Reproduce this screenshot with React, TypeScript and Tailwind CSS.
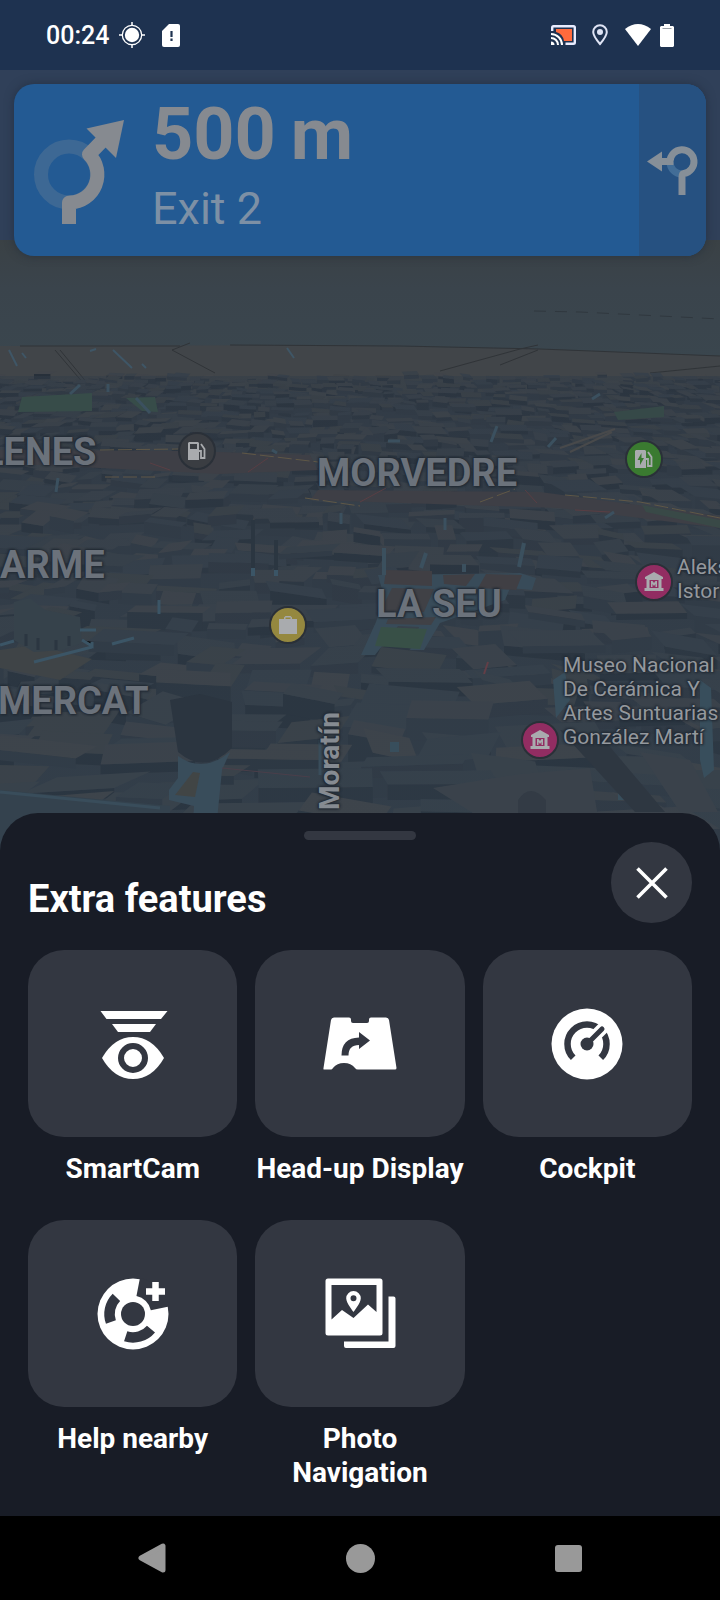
import React from "react";

type Feature = {
  name: string;
  icon: React.ReactNode;
};

type Poi = {
  kind: "fuel" | "charge" | "shop" | "museum";
  place: string;
  color: string;
};

const areas = [
  { name: "LENES", place: "left-[-17px] top-[430px]" },
  { name: "MORVEDRE", place: "left-[317px] top-[451px]" },
  { name: "ARME", place: "left-[0px] top-[543px]" },
  { name: "LA SEU", place: "left-[376px] top-[582px]" },
  { name: "MERCAT", place: "left-[-2px] top-[679px]" },
];

const pois: Poi[] = [
  { kind: "fuel", place: "left-[178px] top-[432px]", color: "bg-[#3a3d42]" },
  { kind: "charge", place: "left-[625px] top-[440px]", color: "bg-[#3a7a30]" },
  { kind: "shop", place: "left-[269px] top-[606px]", color: "bg-[#95883f]" },
  { kind: "museum", place: "left-[635px] top-[563px]", color: "bg-[#922d62]" },
  { kind: "museum", place: "left-[521px] top-[721px]", color: "bg-[#922d62]" },
];

const outline =
  "[text-shadow:0_0_2px_#242c36,0_0_3px_#242c36,1px_1px_2px_#242c36,-1px_-1px_2px_#242c36]";

// Same city on every render
function makeCity() {
  let seed = 17;
  const rnd = () => {
    seed = (seed * 16807) % 2147483647;
    return seed / 2147483647;
  };
  const roofs = ["#3b424a", "#40444a", "#394149", "#43464a", "#37404a", "#3f4347"];
  const walls = ["#2a333d", "#2f3842", "#27303a", "#313a44"];
  const blocks: { wall: string; roof: string; wallFill: string; roofFill: string }[] = [];

  for (let y = 376; y < 880; y += 3 + (y - 360) * 0.036) {
    const s = (y - 335) / 100;
    for (let x = -60; x < 760; ) {
      const w = 6 + s * (6 + rnd() * 20);
      const d = 1.5 + s * (1.5 + rnd() * 5);
      const h = 2 + s * (1.5 + rnd() * rnd() * 9);
      const lean = ((x - 360) / 360) * d * 1.6 + (rnd() - 0.5) * d * 2;
      const tilt = (rnd() - 0.35) * s * 5;
      const top = y + (rnd() - 0.5) * (6 + s * 8);
      const p = (n: number) => n.toFixed(1);
      blocks.push({
        roof: `M${p(x)} ${p(top)}L${p(x + w)} ${p(top + tilt)}L${p(x + w + lean)} ${p(top + d + tilt)}L${p(x + lean)} ${p(top + d)}Z`,
        wall: `M${p(x + lean)} ${p(top + d)}L${p(x + w + lean)} ${p(top + d + tilt)}V${p(top + d + h + tilt)}L${p(x + lean)} ${p(top + d + h)}Z`,
        roofFill: roofs[Math.floor(rnd() * roofs.length)],
        wallFill: walls[Math.floor(rnd() * walls.length)],
      });
      x += w + rnd() * s * 4;
    }
  }
  return blocks;
}

const city = makeCity();

function CityDrawing() {
  return (
    <svg
      className="absolute inset-0 h-full w-full"
      viewBox="0 0 720 1600"
      preserveAspectRatio="xMidYMin slice"
      aria-hidden="true"
    >
      <defs>
        <linearGradient id="sky" x1="0" y1="0" x2="0" y2="1">
          <stop offset="0" stopColor="#3a4145" />
          <stop offset="0.4" stopColor="#3a444c" />
          <stop offset="1" stopColor="#3a464e" />
        </linearGradient>
        <linearGradient id="shade" x1="0" y1="0" x2="0" y2="1">
          <stop offset="0" stopColor="#333b45" stopOpacity="0.4" />
          <stop offset="1" stopColor="#354450" stopOpacity="0.25" />
        </linearGradient>
      </defs>
      <rect width="720" height="1600" fill="#333c46" />
      <rect width="720" height="246" fill="#304059" />
      <rect y="240" width="720" height="120" fill="url(#sky)" />
      <path d="M0 346L300 345L540 349L720 356V392H0Z" fill="#414549" />
      <path d="M534 311L580 312L640 315L720 319" stroke="#30383f" strokeDasharray="12 9" fill="none" />
      <g stroke="#303438" fill="none">
        <path d="M20 346H180M230 345L400 346L540 349L720 356" />
        <path d="M55 350L84 384M60 350L88 384M172 350L215 373M190 343L172 350M440 371L520 349L538 345M500 365L538 350M650 373L720 366" />
      </g>
      <path d="M9 350L17 366M22 353L26 358M113 350L132 368M142 364L146 368M287 348L294 358M90 351L96 349" stroke="#3f5666" strokeWidth="2" />

      {city.map((b, i) => (
        <g key={i}>
          <path d={b.wall} fill={b.wallFill} />
          <path d={b.roof} fill={b.roofFill} />
        </g>
      ))}
      <rect y="376" width="720" height="500" fill="url(#shade)" />

      <path d="M22 397L92 393V411L18 412ZM126 398L155 397L158 412L142 411Z" fill="#384e48" />
      <path d="M614 412L664 406V417L618 420Z" fill="#374b47" />
      <path d="M0 450L190 451L310 455L318 470L220 474L0 463ZM318 490L540 492L720 516V528L560 508L310 500Z" fill="#403f45" />
      <path d="M100 450L180 449M242 453L318 462M105 477H155M305 498L360 506M480 502L515 489M565 495L640 502L720 518" stroke="#665b46" strokeDasharray="14 4" fill="none" />
      <path d="M248 472L268 458M360 502L386 488M525 490L537 503M150 463L170 470M575 510L610 512" stroke="#5f3e42" />
      <path d="M560 448L615 429M570 452L612 432" stroke="#4c4b4a" strokeWidth="2" />
      <path d="M642 505L720 520V528L646 512Z" fill="#3b4b46" />
      <path d="M136 398L150 413M80 385L70 394M108 384V392M272 450L277 453M58 478L56 492M341 513V524M445 518V530M548 447L556 438M592 399L600 394M605 518L614 512M491 442L497 426M388 441H400" stroke="#3d5361" strokeWidth="3" />

      <path d="M378 575L520 573L536 578L532 590L510 588L505 600L440 623L424 650H410L419 627L398 626L375 655H361L376 622L384 597Z" fill="#3a4d5a" />
      <path d="M386 570L432 571V586L384 584ZM443 575L475 574L466 586L444 584ZM486 574L522 575L516 590L478 588Z" fill="#423f43" />
      <path d="M392 588L434 589L424 612H380ZM388 619L436 617L431 625L386 624Z" fill="#424145" />
      <path d="M381 627L427 629L420 649L375 646Z" fill="#3a5346" />
      <path d="M384 548V575M426 553L421 568M524 543L519 567M464 564V572" stroke="#3d5260" strokeWidth="4" />

      <path d="M0 650L34 645L92 659L60 680L0 668Z" fill="#414546" />
      <path d="M14 602L30 598L45 610L80 617L82 643L62 650L34 652L14 640Z" fill="#37424b" />
      <path d="M26 634V646M38 638V650M56 640V650M69 636V646" stroke="#2b353f" strokeWidth="3" />
      <path d="M0 645L14 641M34 662L92 647M82 640L92 646V642M112 644L134 638M80 630H96M159 600V614" stroke="#3d5869" strokeWidth="3" />
      <path d="M253 520V568M276 540V570" stroke="#2b353f" strokeWidth="4" />
      <path d="M253 568V576M276 570V576" stroke="#3d5869" strokeWidth="4" />

      <path d="M170 700L200 694L232 702V748Q205 775 178 752Z" fill="#2b343e" />
      <path d="M178 756Q203 774 230 752L222 770L215 840H192L194 806L169 800V790L178 778Z" fill="#3b4f5d" />
      <path d="M193 772L200 773L195 797L175 795Z" fill="#444644" />
      <path d="M0 790L170 806V860H0Z" fill="#35434e" />
      <path d="M0 792L160 808M320 740V775" stroke="#3b4f5d" strokeWidth="3" />
      <path d="M222 768L310 777" stroke="#4e3f49" />
      <path d="M553 680L565 672L570 700L556 718ZM700 680L711 688L714 770L704 778L700 760ZM620 640V650M390 742H399V752H390ZM618 793H628V800H618Z" fill="#3a505e" />
      <path d="M560 730L600 735L665 812H635Z" fill="#2e363f" />
      <path d="M484 674L488 662" stroke="#6a3e46" strokeWidth="2" />
      <path d="M433 788L520 774L590 768L600 830H500ZM640 752L690 760L718 812H680Z" fill="#3c434b" />
      <path d="M518 800Q530 782 546 800V813H518Z" fill="#343b44" />
      <rect y="376" width="720" height="500" fill="#344453" opacity="0.12" />
    </svg>
  );
}

function PoiIcon({ kind }: { kind: Poi["kind"] }) {
  return (
    <svg viewBox="0 0 20 20" className="h-5 w-5" fill="#a9abae" aria-hidden="true">
      {kind === "museum" && (
        <path
          fillRule="evenodd"
          d="M10 0L19 5V7H17.5V16H19.5V19H.5V16H2.500V7H1V5ZM5.500 8V16H14.500V8ZM7 9H8.500L10 11L11.500 9H13V15H11.500V12L10 14L8.500 12V15H7Z"
        />
      )}
      {kind === "shop" && (
        <path fillRule="evenodd" d="M6 4V2.500L7.500 1H12.500L14 2.500V4H19V19H1V4ZM7.500 4H12.500V2.500H7.500Z" />
      )}
      {(kind === "fuel" || kind === "charge") && (
        <>
          <path
            fillRule="evenodd"
            d={
              kind === "fuel"
                ? "M2 1H11L12 2V19H1V2ZM3 3V8H10V3Z"
                : "M2 1H11L12 2V19H1V2ZM7.500 4L3.500 11H6V16L10 9H7.500Z"
            }
          />
          <path d="M12 10H14V17H17.500V8L14 3" fill="none" stroke="#a9abae" strokeWidth="1.800" />
        </>
      )}
    </svg>
  );
}

function MapView() {
  return (
    <div className="absolute inset-0 overflow-hidden">
      <CityDrawing />
      {areas.map((area) => (
        <span
          key={area.name}
          className={`absolute whitespace-nowrap text-[38px] leading-[44px] font-bold text-[#6b727b] ${outline} ${area.place}`}
        >
          {area.name}
        </span>
      ))}
      {pois.map((poi, i) => (
        <span
          key={i}
          className={`absolute flex h-[38px] w-[38px] items-center justify-center rounded-full border-2 border-[#2a3038] ${poi.color} ${poi.place}`}
        >
          <PoiIcon kind={poi.kind} />
        </span>
      ))}
      <p className={`absolute top-[555px] left-[677px] text-[21px] leading-6 whitespace-nowrap text-[#94989d] ${outline}`}>
        Aleks
        <br />
        Istor
      </p>
      <p className={`absolute top-[653px] left-[563px] text-[21px] leading-6 whitespace-nowrap text-[#94989d] ${outline}`}>
        Museo Nacional
        <br />
        De Cerámica Y
        <br />
        Artes Suntuarias
        <br />
        González Martí
      </p>
      <span
        className={`absolute top-[712px] left-[314px] rotate-180 text-[28px] leading-8 font-bold text-[#868b92] [writing-mode:vertical-rl] ${outline}`}
      >
        Moratín
      </span>
    </div>
  );
}

function StatusBar() {
  return (
    <header className="relative flex h-[70px] items-center justify-between bg-[#1e3250] px-[46px] text-white">
      <div className="flex items-center">
        <span className="pt-0.5 text-[25px] leading-8 font-medium">00:24</span>
        <svg viewBox="0 0 26 26" className="ml-2.5 h-[26px] w-[26px]" aria-hidden="true">
          <circle cx="13" cy="13" r="7.200" fill="#fff" />
          <circle cx="13" cy="13" r="9.700" fill="none" stroke="#fff" strokeWidth="1.300" />
          <path d="M13 0V4M13 22V26M0 13H4M22 13H26" stroke="#fff" strokeWidth="1.500" />
        </svg>
        <svg viewBox="0 0 18 23" className="ml-[17px] h-[23px] w-[18px]" aria-hidden="true">
          <path d="M7 0H16Q18 0 18 2V21Q18 23 16 23H2Q0 23 0 21V7Z" fill="#fff" />
          <path d="M9.500 7V13M9.500 14.500V17" stroke="#1e3250" strokeWidth="2.200" />
        </svg>
      </div>
      <div className="flex items-center">
        <svg viewBox="0 0 25 20" className="h-5 w-[25px]" fill="none" aria-hidden="true">
          <path d="M5 4H21V16H13Q12 9 5 7Z" fill="#ff6a3c" />
          <path d="M1.200 6V2.500Q1.200 1.200 2.500 1.200H22.500Q23.800 1.200 23.800 2.500V17.500Q23.800 18.800 22.500 18.800H14.500" stroke="#e9ecff" strokeWidth="2.400" />
          <path d="M0 9A11 11 0 0 1 11 20M0 13A7 7 0 0 1 7 20" stroke="#fff" strokeWidth="2" />
          <path d="M0 16.500A3.500 3.500 0 0 1 3.500 20H0Z" fill="#fff" />
        </svg>
        <svg viewBox="0 0 16 22" className="ml-4 h-[22px] w-4" aria-hidden="true">
          <path d="M8 1.200A6.800 6.800 0 0 1 14.800 8C14.800 12 8 20 8 20S1.200 12 1.200 8A6.800 6.800 0 0 1 8 1.200Z" fill="none" stroke="#dfe4f5" strokeWidth="2" />
          <circle cx="8" cy="8" r="3" fill="#dfe4f5" />
        </svg>
        <svg viewBox="0 0 26 22" className="ml-[17px] h-[22px] w-[26px]" aria-hidden="true">
          <path d="M0 5Q13 -5 26 5L13 22Z" fill="#fff" />
        </svg>
        <svg viewBox="0 0 14 23" className="ml-[9px] h-[23px] w-3.5" aria-hidden="true">
          <path d="M4 0H10V2H13L14 3V22L13 23H1L0 22V3L1 2H4Z" fill="#fff" />
          <path d="M2.500 4.500H11.500" stroke="#9aa0a8" />
        </svg>
      </div>
    </header>
  );
}

function DirectionBanner() {
  return (
    <section
      aria-label="Next turn"
      className="relative mx-3.5 mt-3.5 flex h-[172px] overflow-hidden rounded-[20px] bg-[#235a93] shadow-[0_0_10px_rgba(30,40,55,0.6)]"
    >
      <svg viewBox="0 0 138 172" className="h-[172px] w-[138px] shrink-0" fill="none" aria-hidden="true">
        <circle cx="55" cy="90.500" r="28" stroke="#3d6894" strokeWidth="14" />
        <path d="M55 140V119Q55 118.500 56 118.500A28 28 0 0 0 75 70.500L92 53" stroke="#868a90" strokeWidth="14" strokeLinejoin="round" />
        <path d="M110 36L72.500 44.500L102 74Z" fill="#868a90" />
      </svg>
      <div className="min-w-0 flex-1 pt-[15px]">
        <p className="text-[72px] leading-[72px] font-bold text-[#868a90]">500{"\u2009"}m</p>
        <p className="mt-2.5 text-[45px] leading-[56px] text-[#7d90a5]">Exit 2</p>
      </div>
      <div className="flex w-[67px] shrink-0 items-center justify-center bg-[#265181]">
        <svg viewBox="0 0 52 50" className="h-[50px] w-[52px]" fill="none" aria-hidden="true">
          <path d="M23 17A12 12 0 0 0 35 29" stroke="#426d97" strokeWidth="7" />
          <path d="M35 50V32Q35 29 37 28.500A12 12 0 1 0 23 16.500H12" stroke="#868f98" strokeWidth="7" />
          <path d="M0 16.500L15 6.500V26.500Z" fill="#868f98" />
        </svg>
      </div>
    </section>
  );
}

const tileIcon = "h-[72px] w-[72px] overflow-visible";

const features: Feature[] = [
  {
    name: "SmartCam",
    icon: (
      <svg viewBox="0 0 72 72" className={tileIcon} fill="#fff" aria-hidden="true">
        <path d="M3.500 3H70.500L64 11H9.500ZM15 16H59L53 24H21Z" />
        <path d="M5 50Q17 29 36 29T67 50Q55 71 36 71T5 50Z" />
        <circle cx="36" cy="50" r="12" stroke="#333741" strokeWidth="6" />
      </svg>
    ),
  },
  {
    name: "Head-up Display",
    icon: (
      <svg viewBox="0 0 72 72" className={tileIcon} fill="#fff" aria-hidden="true">
        <path d="M10 9.500H25Q27 9.500 27 11.500V13Q27 15 29 15H43Q45 15 45 13V11.500Q45 9.500 47 9.500H62Q64.500 9.500 65 12L72.500 60Q72.500 61.500 71 61.500H34Q32 61.500 31 60Q27 55 20 55T9 60Q8 61.500 7 61.500H0Q-1 61.500 -.5 60L7 12Q7.500 9.500 10 9.500Z" />
        <path d="M17.500 47.500H24.500Q24.500 37 35 37V41L46 32.500L35 24V29.500Q17.500 30 17.500 47.500Z" fill="#333741" />
      </svg>
    ),
  },
  {
    name: "Cockpit",
    icon: (
      <svg viewBox="0 0 72 72" className={tileIcon} fill="none" aria-hidden="true">
        <circle cx="36" cy="36" r="35.500" fill="#fff" />
        <path d="M22.200 49.800A19.500 19.500 0 1 1 49.800 49.800" stroke="#333741" strokeWidth="6.500" />
        <path d="M36 36L60 12" stroke="#fff" strokeWidth="12" />
        <circle cx="36" cy="36" r="6.500" fill="#333741" />
        <path d="M36 36L51 21" stroke="#333741" strokeWidth="5" strokeLinecap="round" />
      </svg>
    ),
  },
  {
    name: "Help nearby",
    icon: (
      <svg viewBox="-36 -36 72 72" className={tileIcon} fill="none" aria-hidden="true">
        <circle r="35.500" fill="#fff" />
        <circle r="12" fill="#333741" />
        <path d="M-22.100 8A23.500 23.500 0 0 1 -16.600 -16.600M18 15.100A23.500 23.500 0 0 1 -7.300 22.300" stroke="#333741" strokeWidth="10.500" />
        <path d="M5.200 -27A27.500 27.500 0 0 1 26.900 -5.700" stroke="#333741" strokeWidth="18.500" />
        <path d="M22.500 -32V-13M13 -22.500H32" stroke="#fff" strokeWidth="6.500" />
      </svg>
    ),
  },
  {
    name: "Photo Navigation",
    icon: (
      <svg viewBox="0 0 72 72" className={tileIcon} fill="#fff" aria-hidden="true">
        <path
          fillRule="evenodd"
          d="M4 .5H56Q58.500 .5 58.500 3V55Q58.500 57.500 56 57.500H4Q1.500 57.500 1.500 55V3Q1.500 .5 4 .5ZM7.500 7V41.500L18 32L29.500 40L44 26.500L52.500 34V7Z"
        />
        <path
          fillRule="evenodd"
          d="M29.500 13A7.300 7.300 0 0 1 36.800 20.300C36.800 25 29.500 34 29.500 34S22.200 25 22.200 20.300A7.300 7.300 0 0 1 29.500 13ZM29.500 17.300A3 3 0 1 0 29.500 23.300A3 3 0 1 0 29.500 17.300Z"
        />
        <path d="M64.500 18.500H69.500Q71.500 18.500 71.500 20.500V68Q71.500 70 69.500 70H22Q20 70 20 68V63.500H64.500Z" />
      </svg>
    ),
  },
];

function FeatureSheet() {
  return (
    <section aria-labelledby="sheet-title" className="relative mt-auto rounded-t-[38px] bg-[#181c26] px-7 pb-[26px]">
      <div className="flex justify-center pt-[18px]">
        <span className="h-[9px] w-28 rounded-full bg-[#333741]" />
      </div>
      <div className="mt-0.5 mb-[27px] flex items-start justify-between">
        <h1 id="sheet-title" className="pt-[33px] text-[38px] leading-[48px] font-bold text-white">
          Extra features
        </h1>
        <button type="button" aria-label="Close" className="flex h-[81px] w-[81px] items-center justify-center rounded-full bg-[#333741]">
          <svg viewBox="0 0 32 32" className="h-8 w-8" aria-hidden="true">
            <path d="M1.500 1.500L30.500 30.500M30.500 1.500L1.500 30.500" stroke="#fff" strokeWidth="3.600" />
          </svg>
        </button>
      </div>
      <div className="grid grid-cols-3 gap-x-[18px] gap-y-[34px]">
        {features.map((feature) => (
          <button key={feature.name} type="button" className="flex flex-col items-center">
            <span className="flex h-[187px] w-full items-center justify-center rounded-[36px] bg-[#333741]">
              {feature.icon}
            </span>
            <span className="mt-[15px] text-[28px] leading-[34px] font-bold text-white">{feature.name}</span>
          </button>
        ))}
      </div>
    </section>
  );
}

function SystemNav() {
  return (
    <nav aria-label="System" className="relative flex h-[84px] items-center bg-black px-12">
      <button type="button" aria-label="Back" className="flex flex-1 justify-center">
        <svg viewBox="0 0 28 30" className="h-[30px] w-7" aria-hidden="true">
          <path d="M3 15L25 3V27Z" fill="#999" stroke="#999" strokeWidth="5" strokeLinejoin="round" />
        </svg>
      </button>
      <button type="button" aria-label="Home" className="flex flex-1 justify-center">
        <span className="h-[29px] w-[29px] rounded-full bg-[#999]" />
      </button>
      <button type="button" aria-label="Recent apps" className="flex flex-1 justify-center">
        <span className="h-[27px] w-[27px] rounded-[3px] bg-[#999]" />
      </button>
    </nav>
  );
}

export default function App() {
  return (
    <main className="relative flex min-h-screen flex-col overflow-hidden bg-[#181c26] font-[Roboto,sans-serif]">
      <MapView />
      <StatusBar />
      <DirectionBanner />
      <FeatureSheet />
      <SystemNav />
    </main>
  );
}
